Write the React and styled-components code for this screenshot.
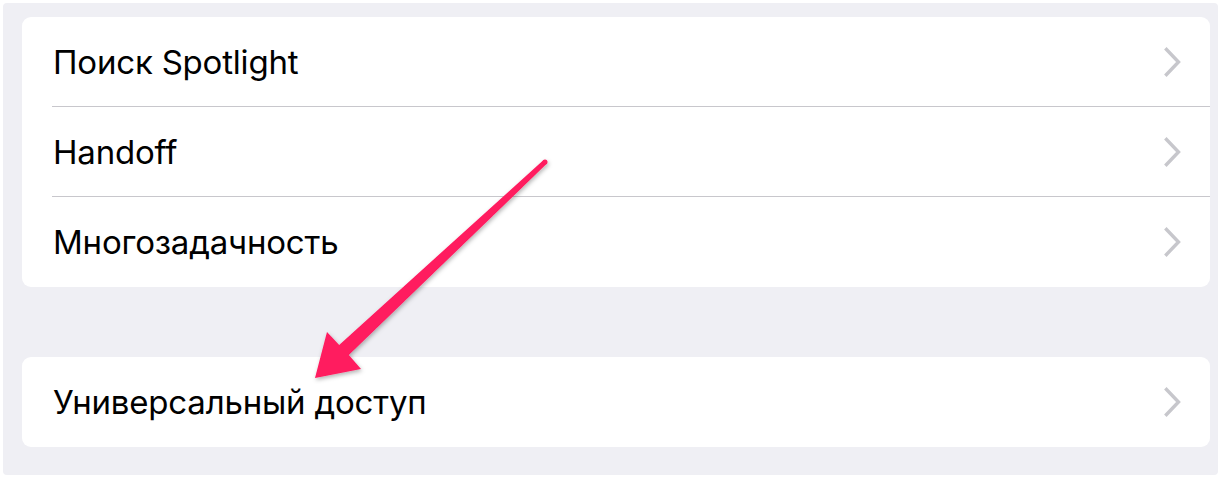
import React from 'react'
import styled, { createGlobalStyle } from 'styled-components'

const GlobalStyle = createGlobalStyle`
  body {
    margin: 0;
    background: #ffffff;
    font-family: Inter, 'Liberation Sans', Arial, sans-serif;
  }
`

const Frame = styled.div`
  position: relative;
  margin: 3px 0 0 3px;
  width: 1215px;
  height: 472px;
  box-sizing: border-box;
  padding: 14px 8px 0 19px;
  background: #efeff4;
  border-radius: 4px;
  display: flex;
  flex-direction: column;
  gap: 70px;
`

const Group = styled.div`
  background: #ffffff;
  border-radius: 9px;
  overflow: hidden;
`

const Row = styled.div`
  position: relative;
  height: 90px;
  display: flex;
  align-items: center;
  padding: 0 28px 0 31px;
  box-sizing: border-box;
  &:not(:last-child)::after {
    content: '';
    position: absolute;
    left: 30px;
    right: 0;
    bottom: 0;
    height: 1px;
    background: #c8c7cc;
  }
`

const Label = styled.span`
  flex: 1;
  font-size: 33px;
  color: #000000;
  letter-spacing: -0.2px;
`

const Chevron = () => (
  <svg width='18' height='30' viewBox='0 0 18 30'>
    <path d='M2.5 2.5 L14.5 15 L2.5 27.5' fill='none' stroke='#c7c7cc' strokeWidth='3.4' strokeLinecap='square' strokeLinejoin='miter' />
  </svg>
)

const ArrowLayer = styled.svg`
  position: absolute;
  left: -3px;
  top: -3px;
  pointer-events: none;
  overflow: visible;
`

const items = ['Поиск Spotlight', 'Handoff', 'Многозадачность']

export default function App () {
  return (
    <>
      <GlobalStyle />
      <Frame>
        <Group>
          {items.map(t => (
            <Row key={t}>
              <Label>{t}</Label>
              <Chevron />
            </Row>
          ))}
        </Group>
        <Group>
          <Row>
            <Label>Универсальный доступ</Label>
            <Chevron />
          </Row>
        </Group>
        <ArrowLayer width='1226' height='478'>
          <defs>
            <filter id='sh' x='-20%' y='-20%' width='140%' height='140%'>
              <feDropShadow dx='1' dy='2' stdDeviation='2' floodColor='#000' floodOpacity='0.3' />
            </filter>
          </defs>
          <g filter='url(#sh)' fill='#ff1a5e'>
            <polygon points='543.3,160.2 339.2,344.9 327,332 315,378 361,369 348.8,355.1 546.7,163.8' />
            <circle cx='545' cy='162' r='2.5' />
          </g>
        </ArrowLayer>
      </Frame>
    </>
  )
}
